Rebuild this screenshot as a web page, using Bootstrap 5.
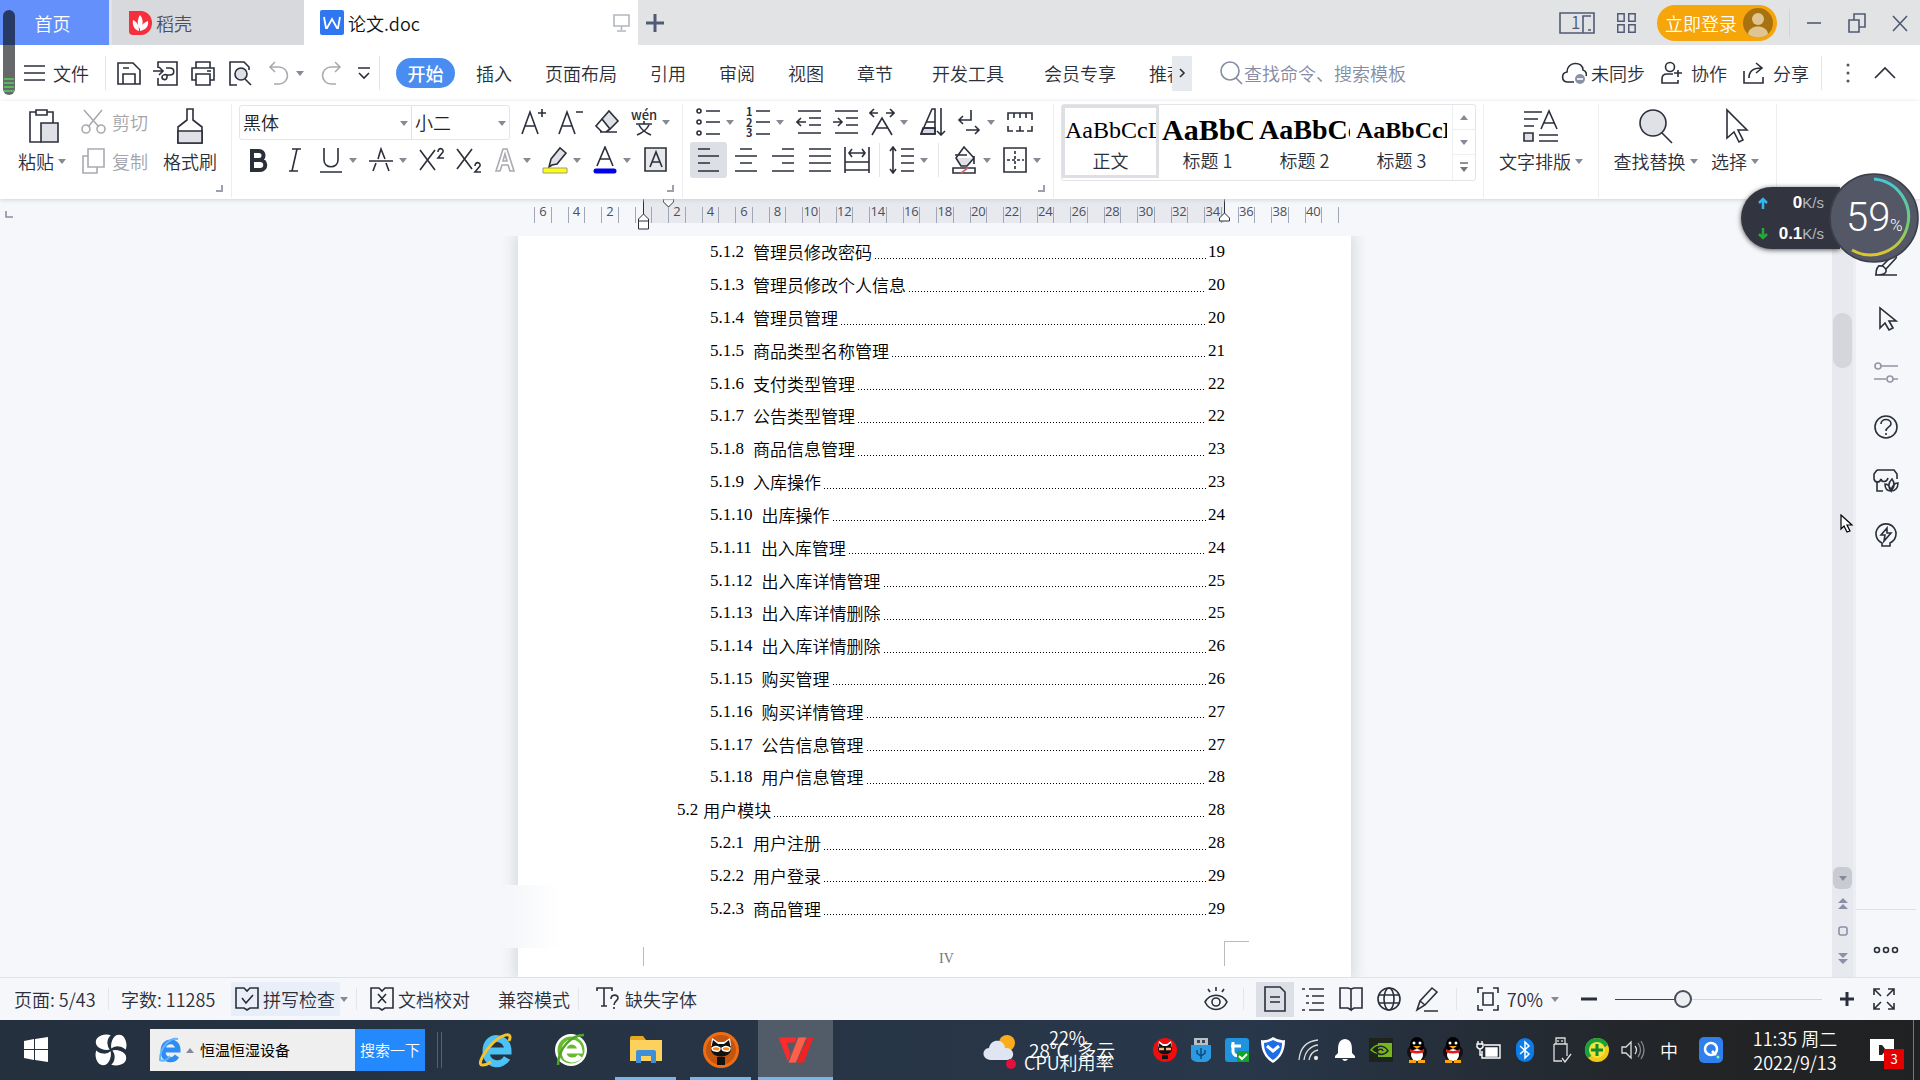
<!DOCTYPE html>
<html lang="zh-CN">
<head>
<meta charset="utf-8">
<meta name="viewport" content="width=device-width, initial-scale=1">
<title>论文.doc</title>
<link href="https://cdn.jsdelivr.net/npm/bootstrap@5.3.0/dist/css/bootstrap.min.css" rel="stylesheet">
<style>
:root{--ink:#2b2f3a;--line:#e3e5e9;--blue:#4a8df0}
body{font-family:"Noto Sans CJK SC",sans-serif;font-size:18px;font-weight:350;line-height:26px;color:var(--ink);background:#f5f7fa;overflow:hidden}
button{font:inherit;color:inherit;background:none;border:0;padding:0}
a{color:inherit;text-decoration:none;white-space:nowrap}
svg{fill:none;stroke:var(--ink);stroke-width:1.6;flex:none;display:block}
svg text{stroke:none;fill:var(--ink)}
.crt{width:0;height:0;border:4px solid transparent;border-top:5px solid #858a96;border-bottom:0;flex:none}
.vline{width:1px;background:var(--line);flex:none}
.dimmed{color:#a3a5ab}.dimmed svg{stroke:#a9abb1}
/* tabs */
.tabstrip{height:45px;background:#e1e3e5;flex:none}
.tab-home{width:109px;background:#6490fb;color:#fff}
.tab-shell{width:195px;background:#d8d9dd;color:#4b4f5a;border-left:3px solid #e1e3e5}
.tab-doc{width:334px;background:#fff;color:#111}
.login{width:120px;height:36px;border-radius:18px;background:#f6a50b;color:#fff}
.tabstrip svg{stroke:#515a75}
/* menu */
.menurow{height:56px;background:#fff;flex:none}
.menurow .m{padding:0 16px 0 17px}
.menurow .wide{padding:0 23px}
.pill{width:59px;height:30px;border-radius:15px;background:var(--blue);color:#fff;font-weight:500}
.finder{border:0;outline:0;width:190px;padding:0;color:#848ba3;font-weight:350}
.finder::placeholder{color:#848ba3;opacity:1}
.tabs-clip{overflow:hidden;width:776px}
.more{width:20px;height:35px;background:#e6e9ee}
/* ribbon */
.ribbon{height:98px;background:#fff;padding-top:3px;flex:none;box-shadow:0 1px 4px #cfd2d8;z-index:2;position:relative}
.grp{border-right:1px solid #eceef1;position:relative;height:94px}
.corner{position:absolute;right:8px;bottom:6px;width:7px;height:7px;border:solid #9aa0ae;border-width:0 2px 2px 0}
.tb{width:37px;height:36px;display:flex;align-items:center;justify-content:center;border-radius:3px}
.tb2{width:50px;height:36px;display:flex;align-items:center;padding-left:5px}
.tb2 .crt{margin-left:5px}
.on{background:#dcdfe5}
.rows{display:grid;row-gap:2px;align-content:start}
.big{height:74px;display:flex;flex-direction:column;align-items:center;white-space:nowrap}
.big .pic{height:44px;display:flex;align-items:center}
.big .cap{height:26px;display:flex;align-items:center;gap:4px}
.fontbox{width:271px;height:35px;border:1px solid var(--line);border-radius:3px}
.pick{position:relative}
.pick select{appearance:none;border:0;background:none;width:100%;height:33px;font:inherit;color:#222;padding:0 0 0 3px}
.pick .crt{position:absolute;right:3px;top:15px}
.gallery{width:415px;height:77px;border:1px solid var(--line);border-radius:3px}
.stl{width:97px;height:73px;overflow:hidden;border:3px solid transparent}
.stl.sel{border-color:#dedfe2}
.stl span{display:block;white-space:nowrap;overflow:hidden;line-height:40px;height:40px;color:#000;text-align:left;font-family:"Liberation Serif",serif;font-size:24px;font-weight:400}
.stl b{display:block;font-weight:350;line-height:20px;padding-bottom:3px}
.stl .h-a{font-size:30px;font-weight:700}.stl .h-b{font-size:28px;font-weight:700}.stl .h-c{font-weight:700}
.gscroll{width:23px;border-left:1px solid #eceef1}
.gscroll button{height:25px;display:flex;align-items:center;justify-content:center;border-bottom:1px solid #eceef1;width:100%}
.gscroll button:last-child{border:0}
.up{transform:rotate(180deg)}
/* document */
.stage{padding-left:37px;position:relative;min-width:0}
.sheetcol{width:833px;margin:0 auto}
.ruler{height:37px;margin:0 12px 0 16px;position:relative}
.ticks{height:24px;background:linear-gradient(90deg,transparent 109px,#e7e9ef 109px,#e7e9ef 690px,transparent 690px)}
.ticks i{flex:1 1 0;border-left:1px solid #a2a7b5;margin-top:8px;height:16px;font:13px/8px "Open Sans",sans-serif;color:#4b5060;display:flex;justify-content:center}
.ticks i:last-child{flex:none;width:1px}
.mk{position:absolute;top:0}
.sheet{background:#fff;box-shadow:0 0 14px 3px #d5d7dc;clip-path:inset(0 -16px 0 -16px)}
.toc{padding:0 126px 0 192px}
.toc a{flex:1 1 0;display:flex;align-items:center;font-family:"Liberation Serif","Noto Sans CJK SC",serif;font-size:17px;line-height:24px;color:#000;font-weight:400}
.toc a.l1{margin-left:-33px}
.toc .no{margin-right:9px}.toc .l1 .no{margin-right:5px}
.toc .ttl{font-family:"Noto Sans CJK SC",sans-serif;font-weight:350}
.toc .dots{flex:1;height:1px;margin:12px 2px 0 3px;background:repeating-linear-gradient(90deg,#000 0 1px,transparent 1px 3px)}
.foot{height:52px;position:relative;color:#777;font:14px/20px "Liberation Serif",serif}
.foot .a{position:absolute;left:125px;bottom:11px;height:19px;border-left:1px solid #bbb}
.foot .b{position:absolute;left:706px;bottom:11px;height:25px;width:25px;border:solid #bbb;border-width:1px 0 0 1px}
.ghost{position:absolute;left:480px;bottom:29px;width:80px;height:63px;background:linear-gradient(90deg,#f5f7fa 40%,#fff)}
.vscroll{width:24px;background:#e8e9ef;border-right:3px solid #eceef2;padding-top:114px;flex:none}
.thumb{width:19px;height:55px;border-radius:9px;background:#d4d6db}
.vdown{width:19px;height:22px;border-radius:6px;background:#c9cbd2}
.side{width:64px;padding:39px 0 0;flex:none}
.side .s{height:54px;display:flex;align-items:center;justify-content:center;width:60px}
.side .last{height:68px;border-top:1px solid #dde0e5;padding-top:13px}
/* status */
.status{height:43px;border-top:1px solid #dfe2e5;background:#f5f7fa;flex:none;white-space:nowrap}
.status .vline{height:22px}
.status .split{margin:0 13px 0 8px}
.spell{background:#e8eff9;width:109px;height:34px}
.view{width:38px;height:35px;display:flex;align-items:center;justify-content:center}
.zoomer{appearance:none;width:207px;height:20px;background:linear-gradient(90deg,#3a4254 33%,#d4d6da 33%) center/100% 1px no-repeat;margin:0 18px}
.zoomer::-webkit-slider-thumb{appearance:none;width:18px;height:18px;border-radius:9px;border:2px solid #4a4e58;background:#eceef0}
/* task bar */
.taskbar{height:60px;flex:none;color:#fff;background:linear-gradient(90deg,#24303e,#28374a 65%,#222426 88%,#202123)}
.taskbar svg{stroke:none}
.seek{width:205px;height:42px;background:#efefef;padding-left:8px}
.seek input{border:0;outline:0;background:none;font-size:15px;width:140px;color:#000;padding:0;margin-left:6px}
.go{width:70px;height:42px;background:#2389fd;font-size:15px}
.app{width:75px;height:60px;display:flex;align-items:center;justify-content:center;position:relative}
.app.run::after{content:"";position:absolute;left:7px;right:7px;bottom:0;height:3px;background:#79b5ea}
.app.cur{background:#525c69}.app.cur::after{left:0;right:0}
.t{width:36px;height:60px;display:flex;align-items:center;justify-content:center}
.weather{width:164px;height:60px;position:relative}
.weather span{position:absolute;white-space:nowrap}
.clock{width:124px;line-height:24px;font-size:18px}
.badge3{position:absolute;left:17px;top:29px;width:20px;height:20px;background:#e50000;font-size:13px;line-height:20px;text-align:center}
/* overlays */
.cap-l{position:absolute;left:3px;top:10px;width:12px;height:85px;border-radius:6px;z-index:5;background:linear-gradient(#273a66 35px,#66686a 35px);overflow:hidden}
.cap-l i{position:absolute;left:1px;right:1px;bottom:1px;height:16px;background:repeating-linear-gradient(#57b85f 0 2px,transparent 2px 4px)}
.net{position:absolute;right:80px;top:187px;width:99px;height:62px;border-radius:31px 0 0 31px;background:#323440;box-shadow:0 1px 5px #555;z-index:5;color:#fff;font:700 17px/20px "Liberation Sans",sans-serif;padding:0 16px 0 16px}
.net small{font-weight:400;color:#b4b7bf;font-size:15px}
.net div{height:31px}
.orb{position:absolute;right:1px;top:173px;z-index:6}
.mouse{position:absolute;right:66px;top:514px;z-index:6}
</style>
</head>
<body class="d-flex flex-column vh-100 position-relative">

<header class="tabstrip d-flex align-items-center">
  <button class="tab-home h-100"><span class="pe-1">首页</span></button>
  <button class="tab-shell h-100 d-flex align-items-center ps-3">
    <svg width="24" height="26" viewBox="0 0 24 26" style="stroke:none"><path fill="#f72e3c" d="M1 1h12a11 12 0 0 1 0 24H5a4 4 0 0 1-4-4z"/><path fill="#fff" d="M12 5c4 5 3 10 0 14-3-4-3-9 0-14zM5 10c4 2 6 5 6 11-4-1-7-5-6-11zM20 11c1 6-3 9-8 10 0-5 3-8 8-10z"/></svg><span class="ms-1">稻壳</span></button>
  <div class="tab-doc h-100 d-flex align-items-center ps-3">
    <svg width="24" height="26" viewBox="0 0 24 26"><rect width="24" height="25" rx="2" fill="#2f77f0" stroke="none"/><path stroke="#fff" stroke-width="1.8" d="M4 7l2 11h1l5-9 5 9h1l2-11"/></svg>
    <span class="ms-1">论文.doc</span>
    <svg class="ms-auto me-2" style="stroke:#b3b6bf" width="17" height="18" viewBox="0 0 17 18"><path d="M1 1h15v11H1zM8.500 12v4M4 17h9"/></svg>
  </div>
  <button class="ms-2" aria-label="新建"><svg width="18" height="18" viewBox="0 0 18 18"><path stroke-width="3" d="M9 0v18M0 9h18"/></svg></button>
  <div class="ms-auto d-flex align-items-center h-100">
    <svg width="36" height="22" viewBox="0 0 36 22"><path d="M24 21H1V1h34v20H24V4h8M29 18h3"/><text x="12" y="17" font-size="17" style="fill:#515a75">1</text></svg>
    <svg class="mx-3 ps-1" width="26" height="22" viewBox="-2 0 24 22"><path d="M1 1h7v8H1zM13 1h7v8h-7zM1 13h7v8H1zM13 13h7v8h-7z"/></svg>
    <button class="login ms-1 d-flex align-items-center justify-content-between ps-2 pe-1"><span class="text-nowrap">立即登录</span>
      <svg width="30" height="30" viewBox="0 0 30 30" style="stroke:none"><circle cx="15" cy="15" r="15" fill="#a8720f"/><circle cx="15" cy="11" r="6" fill="#e0c590"/><path fill="#e0c590" d="M5 26c1-10 19-10 20 0-6 5-14 5-20 0z"/></svg></button>
    <div class="vline" style="height:28px;background:#cfd2d6;margin:0 14px 0 12px"></div>
    <svg width="20" height="20" viewBox="0 0 20 20"><path d="M3 10h14"/></svg>
    <svg class="ms-4" width="18" height="20" viewBox="0 0 18 20"><path d="M1 7h10v12H1zM6 7V1h11v13h-6"/></svg>
    <svg class="ms-4" style="margin-right:10px" width="20" height="20" viewBox="0 0 20 20"><path d="M3 3l14 15M17 3L3 18"/></svg>
  </div>
</header>

<nav class="menurow d-flex align-items-center">
  <button class="d-flex align-items-center ms-4"><svg width="21" height="18" viewBox="0 0 21 18"><path d="M0 2h21M0 9h21M0 16h21"/></svg><span class="ms-2">文件</span></button>
  <div class="vline ms-3" style="height:34px"></div>
  <button class="tb ms-1"><svg width="26" height="26" viewBox="0 0 26 26"><path d="M2 3h15l7 7v14H2zM7 24V14h12v10M7 8h6"/></svg></button>
  <button class="tb"><svg width="26" height="26" viewBox="0 0 26 26"><path d="M5 8V2h19v23H5v-7M0 11h9M6 7l4 4-4 4M13 8h4c5 0 5 7 0 7h-3v2c0 4-5 3-5 0 0-2 3-3 5-2"/></svg></button>
  <button class="tb"><svg width="26" height="26" viewBox="0 0 26 26"><path d="M6 8V2h14v6M6 20H2V8h22v12h-4M6 14h14v11H6zM17 11h4"/></svg></button>
  <button class="tb"><svg width="26" height="26" viewBox="0 0 26 26"><path d="M10 25H3V2h14l5 5v3"/><circle cx="14" cy="14" r="6" fill="#dfe1e6"/><path d="M18 19l6 6"/></svg></button>
  <button class="tb2 dimmed ms-1"><svg width="24" height="26" viewBox="0 0 24 26"><path d="M8 2L3 7l5 5M3 7h9a8 8 0 1 1 0 17H7"/></svg><i class="crt"></i></button>
  <button class="tb dimmed me-2"><svg width="24" height="26" viewBox="0 0 24 26"><path d="M16 2l5 5-5 5M21 7h-9a8 8 0 1 0 0 17h5"/></svg></button>
  <svg width="14" height="14" viewBox="0 0 14 14"><path d="M1 2h12M2 7l5 5 5-5"/></svg>
  <div class="vline ms-2" style="height:34px"></div>
  <div class="tabs-clip d-flex align-items-center ms-3 flex-shrink-0">
    <a href="#" class="pill d-flex align-items-center justify-content-center me-1 flex-shrink-0">开始</a>
    <a href="#" class="m">插入</a><a href="#" class="m">页面布局</a><a href="#" class="m">引用</a><a href="#" class="m">审阅</a><a href="#" class="m">视图</a><a href="#" class="m">章节</a><a href="#" class="m wide">开发工具</a><a href="#" class="m">会员专享</a><a href="#" class="m">推荐</a>
  </div>
  <button class="more d-flex align-items-center justify-content-center"><svg width="8" height="12" viewBox="0 0 8 12"><path d="M2 2l4 4-4 4"/></svg></button>
  <label class="d-flex align-items-center ms-4"><svg class="ms-1" style="stroke:#848ba3" width="24" height="26" viewBox="0 0 24 26"><circle cx="10" cy="11" r="9"/><path d="M16 18l6 6"/></svg><input class="finder" placeholder="查找命令、搜索模板" aria-label="查找命令"></label>
  <div class="ms-auto d-flex align-items-center">
    <button class="d-flex align-items-center gap-1"><svg width="26" height="24" viewBox="0 0 26 24"><path d="M13 21H7C0 21 0 12 6 11 6 0 22 0 22 9c3 1 4 4 3 6"/><circle cx="19" cy="18" r="5" fill="#8a92a8" stroke="none"/><path stroke="#fff" d="M16 18h6"/></svg>未同步</button>
    <button class="d-flex align-items-center gap-2 ms-3"><svg width="22" height="24" viewBox="0 0 22 24"><circle cx="9" cy="6" r="4.500"/><path d="M13 22H1v-4c0-3 2-5 5-5h6M13 22h4v-3M17 9v7M13 12h8"/></svg>协作</button>
    <button class="d-flex align-items-center gap-2 ms-3"><svg width="22" height="24" viewBox="0 0 22 24"><path d="M1 10v12h19v-6M6 17c0-7 4-10 12-10M13 2l6 5-6 5"/></svg>分享</button>
    <div class="vline" style="height:34px;margin:0 24px 0 12px"></div>
    <svg width="4" height="20" viewBox="0 0 4 20" style="stroke:none;fill:#555"><circle cx="2" cy="2" r="1.500"/><circle cx="2" cy="10" r="1.500"/><circle cx="2" cy="18" r="1.500"/></svg>
    <svg class="mx-4" width="22" height="14" viewBox="0 0 22 14"><path d="M1 12L11 2l10 10"/></svg>
  </div>
</nav>

<section class="ribbon d-flex">
  <div class="grp d-flex" style="width:232px">
    <button class="big ps-2" style="width:76px"><span class="pic ps-1"><svg width="34" height="36" viewBox="0 0 34 36"><path d="M14 34H3V4h6M20 4h6v11"/><path d="M9 2h11v5H9z"/><path fill="#dfe1e6" d="M14 15h17v19H14z"/></svg></span><span class="cap">粘贴<i class="crt"></i></span></button>
    <div class="rows dimmed">
      <button class="d-flex align-items-center" style="height:36px"><svg class="mx-1" width="28" height="26" viewBox="0 0 28 26"><path d="M4 1l15 17M22 1L8 18"/><circle cx="6" cy="20" r="4"/><circle cx="21" cy="20" r="4"/></svg><span class="text-nowrap">剪切</span></button>
      <button class="d-flex align-items-center" style="height:38px"><svg class="mx-1" width="28" height="26" viewBox="0 0 28 26"><path d="M8 8H3v17h14v-6M8 1h16v18H8z"/></svg><span class="text-nowrap">复制</span></button>
    </div>
    <button class="big ms-2" style="width:68px"><span class="pic"><svg width="30" height="38" viewBox="0 0 30 38"><path d="M12 2h6v11l9 7v16H3V20l9-7z"/><path fill="#dfe1e6" d="M3 24h24v12H3z"/></svg></span><span class="cap">格式刷</span></button>
    <i class="corner"></i>
  </div>

  <div class="grp" style="width:451px;padding-left:7px"><div class="rows">
    <div class="d-flex align-items-center" style="height:36px">
      <div class="fontbox d-flex me-1"><div class="pick border-end" style="width:172px"><select aria-label="字体"><option>黑体</option></select><i class="crt"></i></div><div class="pick flex-fill"><select aria-label="字号"><option>小二</option></select><i class="crt"></i></div></div>
      <button class="tb" aria-label="增大字号"><svg width="26" height="28" viewBox="0 0 26 28"><path d="M2 26L10 4l8 22M5 18h10M22 1v8M18 5h8"/></svg></button>
      <button class="tb" aria-label="减小字号"><svg width="26" height="28" viewBox="0 0 26 28"><path d="M2 26L10 4l8 22M5 18h10M19 4h7"/></svg></button>
      <button class="tb" aria-label="清除格式"><svg width="26" height="26" viewBox="0 0 26 26"><path fill="#dfe1e6" d="M8 10l7-8 9 10-8 8z"/><path d="M8 10l-6 7 6 6h4l4-3M6 23h17"/></svg></button>
      <button class="tb2" aria-label="拼音"><svg width="28" height="28" viewBox="0 0 28 28"><text x="1" y="12" font-size="13" font-weight="500">wén</text><path d="M6 16h16M14 13v3M9 17c3 6 7 8 12 10M19 17c-3 6-7 8-12 10"/></svg><i class="crt ms-1"></i></button>
    </div>
    <div class="d-flex" style="height:36px">
      <button class="tb"><svg width="26" height="26" viewBox="0 0 26 26"><path stroke-width="4" d="M7 4h7c6 0 6 9 0 9H7zM7 13h8c7 0 7 10 0 10H7z"/></svg></button>
      <button class="tb"><svg width="26" height="26" viewBox="0 0 26 26"><path d="M10 2h9M7 24h9M15 2l-5 22"/></svg></button>
      <button class="tb2"><svg width="26" height="26" viewBox="0 0 26 26"><path d="M6 1v12c0 9 14 9 14 0V1M2 25h22"/></svg><i class="crt"></i></button>
      <button class="tb2"><svg width="26" height="26" viewBox="0 0 26 26"><path d="M5 24l3-8M10 12l3-10 4 10M18 16l3 8M1 14h24"/></svg><i class="crt"></i></button>
      <button class="tb"><svg width="26" height="26" viewBox="0 0 26 26"><path d="M1 3l15 20M16 3L1 23"/><path d="M19 5c0-5 6-4 5 0l-5 6h6"/></svg></button>
      <button class="tb"><svg width="26" height="26" viewBox="0 0 26 26"><path d="M1 2l15 20M16 2L1 22"/><path d="M19 19c0-5 6-4 5 0l-5 6h6"/></svg></button>
      <button class="tb2 dimmed"><svg width="26" height="26" viewBox="0 0 26 26"><path d="M4 24L11 2h4l7 22h-4l-2-6h-6l-2 6zM11 14l2-7 2 7z"/></svg><i class="crt"></i></button>
      <button class="tb2"><svg width="26" height="28" viewBox="0 0 26 28"><path fill="#dfe1e6" d="M9 13l9-11 6 5-9 11-5 1-3 2z"/><path fill="#ff0" stroke="#999" stroke-width="1" d="M1 22h24v5H1z"/></svg><i class="crt"></i></button>
      <button class="tb2"><svg width="26" height="28" viewBox="0 0 26 28"><path d="M5 20l8-19 8 19M8 13h10"/><path stroke="#0202e6" stroke-width="5" stroke-linecap="round" d="M4 25h18"/></svg><i class="crt"></i></button>
      <button class="tb"><svg width="24" height="26" viewBox="0 0 24 26"><path fill="#e6e8ec" d="M1 1h21v23H1z"/><path d="M6 20l6-15 6 15M8 15h8"/></svg></button>
    </div></div><i class="corner"></i>
  </div>

  <div class="grp" style="width:371px;padding-left:7px"><div class="rows">
    <div class="d-flex" style="height:36px">
      <button class="tb2"><svg width="26" height="28" viewBox="0 0 26 28"><path d="M11 3h14M11 14h14M11 26h14"/><circle cx="4" cy="3" r="2"/><circle cx="4" cy="14" r="2"/><circle cx="4" cy="25" r="2"/></svg><i class="crt"></i></button>
      <button class="tb2"><svg width="26" height="30" viewBox="0 0 26 30"><path d="M11 4h14M11 15h14M11 27h14"/><text x="1" y="9" font-size="11" font-weight="700">1</text><text x="1" y="20" font-size="11" font-weight="700">2</text><text x="1" y="30" font-size="11" font-weight="700">3</text></svg><i class="crt"></i></button>
      <button class="tb"><svg width="26" height="26" viewBox="0 0 26 26"><path d="M2 2h23M13 9h12M13 16h12M2 24h23M1 13h9M5 9l-4 4 4 4"/></svg></button>
      <button class="tb"><svg width="26" height="26" viewBox="0 0 26 26"><path d="M2 2h23M13 9h12M13 16h12M2 24h23M0 13h9M5 9l4 4-4 4"/></svg></button>
      <button class="tb2"><svg width="26" height="28" viewBox="0 0 26 28"><path d="M3 27l10-17 10 17M7 20h12M1 5h8M5 1L1 5l4 4M17 5h8M21 1l4 4-4 4"/></svg><i class="crt"></i></button>
      <button class="tb"><svg width="26" height="28" viewBox="0 0 26 28"><path fill="#dad6e8" d="M3 20h12v6H1z"/><path d="M1 26L12 1h3v25zM6 14h9M3 20h12M21 0v27M17 23l4 4 4-4"/></svg></button>
      <button class="tb2"><svg width="26" height="28" viewBox="0 0 26 28"><path d="M15 2v10H3M7 8l-4 4 4 4M10 22h13M19 18l4 4-4 4"/></svg><i class="crt"></i></button>
      <button class="tb"><svg width="26" height="22" viewBox="0 0 26 22"><path d="M1 9V2h24v7M7 2v5M13 2v5M19 2v5M1 15v5h5M25 15v5h-5M9 20h8M13 15v5"/></svg></button>
    </div>
    <div class="d-flex align-items-center" style="height:36px">
      <button class="tb on"><svg width="26" height="26" viewBox="0 0 26 26"><path d="M2 2h12M2 9h21M2 16h12M2 24h21"/></svg></button>
      <button class="tb"><svg width="26" height="26" viewBox="0 0 26 26"><path d="M7 2h12M2 9h22M7 16h12M2 24h22"/></svg></button>
      <button class="tb"><svg width="26" height="26" viewBox="0 0 26 26"><path d="M12 2h12M2 9h22M12 16h12M2 24h22"/></svg></button>
      <button class="tb"><svg width="26" height="26" viewBox="0 0 26 26"><path d="M2 2h22M2 9h22M2 16h22M2 24h22"/></svg></button>
      <button class="tb"><svg width="26" height="26" viewBox="0 0 26 26"><path d="M1 0v26M25 0v26M1 15h24M1 23h24M5 6h16M8 2L5 6l3 4M18 2l3 4-3 4"/></svg></button>
      <div class="vline mx-1" style="height:34px"></div>
      <button class="tb2"><svg width="26" height="28" viewBox="0 0 26 28"><path d="M4 1v26M1 5l3-4 3 4M1 23l3 4 3-4M12 3h13M12 10h13M12 17h13M12 25h13"/></svg><i class="crt"></i></button>
      <div class="vline mx-1" style="height:34px"></div>
      <button class="tb2 ms-1"><svg width="26" height="28" viewBox="0 0 26 28"><path fill="#dfe1e6" d="M5 12h17l-5 8H10z" stroke="none"/><path d="M12 1l10 11-7 8H9l-5-8zM3 9h12M22 10v8M1 22h22v5H1z"/><path stroke="#d66" d="M9 27l7-5"/></svg><i class="crt"></i></button>
      <button class="tb2"><svg width="26" height="28" viewBox="0 0 26 28"><path d="M2 2h22v24H2z"/><path stroke-dasharray="3 2" d="M13 5v18M5 14h17"/></svg><i class="crt"></i></button>
    </div></div><i class="corner"></i>
  </div>

  <div class="grp" style="width:430px;padding-left:7px">
    <div class="gallery d-flex">
      <button class="stl sel"><span>AaBbCcDd</span><b>正文</b></button>
      <button class="stl"><span class="h-a">AaBbCc</span><b>标题 1</b></button>
      <button class="stl"><span class="h-b">AaBbCc</span><b>标题 2</b></button>
      <button class="stl"><span class="h-c">AaBbCcDd</span><b>标题 3</b></button>
      <div class="gscroll ms-auto"><button><i class="crt up"></i></button><button><i class="crt"></i></button><button><svg width="10" height="12" viewBox="0 0 10 12" style="stroke:#777"><path d="M1 1h8"/><path fill="#777" stroke="none" d="M1 5h8l-4 5z"/></svg></button></div>
    </div>
  </div>

  <div class="grp" style="width:115px"><button class="big w-100"><span class="pic"><svg width="36" height="34" viewBox="0 0 36 34"><path d="M1 3h18M1 10h14M1 17h10M16 26h19M16 32h19M18 20l8-18 8 18M21 14h10"/><path fill="#dfe1e6" d="M1 24h9v8H1z"/></svg></span><span class="cap">文字排版<i class="crt"></i></span></button></div>
  <div class="grp d-flex" style="width:178px;padding-left:8px">
    <button class="big" style="width:97px"><span class="pic"><svg width="36" height="36" viewBox="0 0 36 36"><circle cx="15" cy="15" r="13" fill="#dfe1e6"/><path d="M24 25l10 10"/></svg></span><span class="cap">查找替换<i class="crt"></i></span></button>
    <button class="big" style="width:62px"><span class="pic ps-1"><svg width="26" height="36" viewBox="0 0 26 36"><path d="M3 2v28l7-6 5 10 4-2-5-10h9z"/></svg></span><span class="cap">选择<i class="crt"></i></span></button>
  </div>
</section>

<main class="d-flex flex-fill" style="min-height:0">
  <div class="stage flex-fill d-flex flex-column">
    <svg style="position:absolute;left:5px;top:12px;stroke:#8a90a0" width="8" height="8" viewBox="0 0 8 8"><path d="M1 0v6h7"/></svg>
    <div class="sheetcol"><div class="ruler"><div class="ticks d-flex" id="ticks"></div>
      <svg class="mk" style="left:103px" width="40" height="32" viewBox="0 0 40 32"><path stroke-width="1" fill="#fff" d="M6.500 0v15l5 5v10h-10V20l5-5M1.500 22h10M26.500 0h10v3l-5 5-5-5z"/></svg>
      <svg class="mk" style="left:684px" width="14" height="26" viewBox="0 0 14 26"><path stroke-width="1" fill="#fff" d="M6.500 0v14l5 5v3h-10v-3l5-5"/></svg>
    </div></div>
    <article class="sheet sheetcol flex-fill d-flex flex-column">
      <div class="toc flex-fill d-flex flex-column" id="toc"></div>
      <div class="foot text-center pt-4"><span class="ms-4">IV</span><i class="a"></i><i class="b"></i></div>
    </article>
    <div class="ghost"></div>
  </div>
  <div class="vscroll d-flex flex-column align-items-center">
    <div class="thumb"></div>
    <button class="vdown mt-auto d-flex align-items-center justify-content-center"><i class="crt"></i></button>
    <svg style="stroke:none;fill:#8a90a6;margin:9px 0 12px" width="10" height="12" viewBox="0 0 10 12"><path d="M5 0l5 5H0zM5 6l5 5H0z"/></svg>
    <svg style="stroke:#8a90a6;margin:4px 0 12px" width="10" height="10" viewBox="0 0 10 10"><rect x="1" y="1" width="8" height="8" rx="2"/></svg>
    <svg style="stroke:none;fill:#8a90a6;margin:5px 0 12px" width="10" height="12" viewBox="0 0 10 12"><path d="M5 5l5-5H0zM5 11l5-5H0z"/></svg>
  </div>
  <aside class="side d-flex flex-column">
    <button class="s"><svg width="24" height="24" viewBox="0 0 24 24"><path d="M1 22h22M8 13L19 2c2-1 4 1 3 3L12 16M8 13c-4-1-6 2-6 9 6 0 11-1 10-5-1-3-4-5-8-4z"/></svg></button>
    <button class="s"><svg width="24" height="26" viewBox="0 0 24 26"><path d="M6 2v20l5-5 4 7 4-2-4-7h7z"/></svg></button>
    <button class="s"><svg style="stroke:#9397a3" width="26" height="26" viewBox="0 0 26 26"><path d="M8 6h17M1 19h12M20 19h5"/><circle cx="5" cy="6" r="3"/><circle cx="17" cy="19" r="3"/></svg></button>
    <button class="s"><svg width="24" height="24" viewBox="0 0 24 24"><circle cx="12" cy="12" r="11"/><path d="M7 9c0-6 10-6 10 0 0 3-5 3-5 7M12 18v2"/></svg></button>
    <button class="s"><svg width="26" height="24" viewBox="0 0 26 24"><path d="M4 12v10h6M4 1h17l3 4v5M4 1L1 5v5c1 4 6 4 7 0 1 4 6 3 7-1M18 22c-3-4-3-8 1-12 3 4 3 8-1 12-4 0-6-3-6-7 3 0 5 2 6 7 4 0 7-3 7-8-4 0-6 3-7 8z"/></svg></button>
    <button class="s"><svg width="24" height="26" viewBox="0 0 24 26"><path d="M8 21a10 10 0 1 1 8 0v3H8zM13 6l-6 7h4l-1 6 7-8h-4z"/></svg></button>
    <button class="s last mt-auto"><svg width="26" height="8" viewBox="0 0 26 8"><circle cx="4" cy="4" r="2.500"/><circle cx="13" cy="4" r="2.500"/><circle cx="22" cy="4" r="2.500"/></svg></button>
  </aside>
</main>

<footer class="status d-flex align-items-center">
  <span style="width:108px;padding-left:14px">页面: 5/43</span><div class="vline"></div>
  <span style="width:118px" class="ps-2 ms-1">字数: 11285</span>
  <button class="spell d-flex align-items-center"><svg class="mx-1" width="24" height="24" viewBox="0 0 24 24"><path d="M1 1h8l3 3 3-3h8v20h-8l-3 2-3-2H1zM7 11l4 5 7-8"/></svg>拼写检查</button><i class="crt"></i>
  <div class="vline split"></div>
  <button class="d-flex align-items-center"><svg class="me-1" width="24" height="24" viewBox="0 0 24 24"><path d="M1 1h8l3 3 3-3h8v20h-8l-3 2-3-2H1zM8 7l8 9M16 7l-8 9"/></svg>文档校对</button>
  <button class="ms-4 ps-1">兼容模式</button><div class="vline ms-2 me-3"></div>
  <button class="d-flex align-items-center"><svg class="me-1" width="26" height="26" viewBox="0 0 26 26"><path d="M2 5V2h15v3M9 2v18M6 20h6M16 13c0-5 7-5 7-1 0 3-4 3-4 7M19 21v2"/></svg>缺失字体</button>
  <div class="ms-auto d-flex align-items-center">
    <button class="view"><svg width="24" height="26" viewBox="0 0 24 26"><path d="M1 16c5-9 17-9 22 0-5 10-17 10-22 0zM12 1v4M4 3l2 3M20 3l-2 3"/><circle cx="12" cy="16" r="4"/></svg></button>
    <div class="vline mx-2"></div>
    <button class="view on ms-1"><svg width="22" height="26" viewBox="0 0 22 26"><path d="M1 1h15l5 5v19H1zM6 11h10M6 16h10"/></svg></button>
    <button class="view"><svg width="24" height="26" viewBox="0 0 24 26"><path d="M1 3h3M8 3h15M5 10h3M11 10h12M5 17h3M11 17h12M1 24h3M8 24h15"/></svg></button>
    <button class="view"><svg width="24" height="26" viewBox="0 0 24 26"><path d="M12 3v21l-3-2H1V2h8zl3-1h8v20h-8l-3 2"/></svg></button>
    <button class="view"><svg width="24" height="26" viewBox="0 0 24 26"><circle cx="12" cy="13" r="11"/><ellipse cx="12" cy="13" rx="5" ry="11"/><path d="M2 9h20M2 17h20"/></svg></button>
    <button class="view"><svg width="24" height="26" viewBox="0 0 24 26"><path d="M9 25h14M2 24l3-9L17 2l5 4L10 19z M5 15l5 4"/></svg></button>
    <div class="vline" style="margin:0 12px 0 10px"></div>
    <button class="view"><svg width="22" height="26" viewBox="0 0 22 26"><path d="M1 7V2h5M16 2h5v5M21 19v5h-5M6 24H1v-5M6 7h10v12H6z"/></svg></button>
    <button class="d-flex align-items-center gap-2">70%<i class="crt"></i></button>
    <svg style="margin-left:22px" width="16" height="14" viewBox="0 0 16 14"><path stroke-width="3" d="M0 7h16"/></svg>
    <input type="range" class="zoomer" min="0" max="100" value="31" aria-label="显示比例">
    <svg width="14" height="14" viewBox="0 0 14 14"><path stroke-width="3" d="M0 7h14M7 0v14"/></svg>
    <svg class="ms-4" style="margin-right:24px;margin-left:18px!important" width="24" height="24" viewBox="0 0 24 24"><path d="M2 8V2h6M16 2h6v6M22 16v6h-6M8 22H2v-6M2 2l7 7M22 2l-7 7M22 22l-7-7M2 22l7-7"/></svg>
  </div>
</footer>

<footer class="taskbar d-flex align-items-center">
  <button class="t" style="width:72px"><svg width="24" height="26" viewBox="0 0 24 26" style="fill:#fff"><path d="M0 4l10-2v10H0zM11 2l13-2v12H11zM0 13h10v10L0 21zM11 13h13v12l-13-2z"/></svg></button>
  <button class="t" style="width:78px"><svg width="34" height="34" viewBox="0 0 34 34" style="stroke:#24303e;stroke-width:1.500;fill:#fff"><defs><path id="petal" d="M17 17C11 19 1 16 1 9 1 2 11-1 18 2 13 6 13 13 17 17z"/></defs><use href="#petal"/><use href="#petal" transform="rotate(90 17 17)"/><use href="#petal" transform="rotate(180 17 17)"/><use href="#petal" transform="rotate(270 17 17)"/></svg></button>
  <div class="seek d-flex align-items-center"><svg width="24" height="28" viewBox="0 0 24 28"><path stroke="#2e8df5" stroke-width="5" d="M6 14h14C20 3 5 3 5 15c0 10 10 11 14 5"/><path stroke="#63b4fb" stroke-width="2" d="M20 3c-8-2-18 8-18 21 4 2 8-1 10-4"/></svg><i class="crt up ms-1"></i><input value="恒温恒湿设备" aria-label="搜索"></div>
  <button class="go">搜索一下</button>
  <div class="vline" style="height:36px;margin:0 3px 0 12px;background:#566170"></div><div class="vline" style="height:36px;margin-right:16px;background:#566170"></div>
  <button class="app"><svg width="36" height="36" viewBox="0 0 36 36"><path stroke="#4cc3f4" stroke-width="7" d="M9 19h21C30 3 8 2 8 19c0 15 16 16 21 7"/><path stroke="#f3c22c" stroke-width="3" d="M31 9c5-11-9-6-18 4S-1 34 5 33c3 0 5-1 8-3"/></svg></button>
  <button class="app"><svg width="36" height="36" viewBox="0 0 36 36"><circle cx="18" cy="18" r="16" fill="#fff"/><circle cx="18" cy="18" r="13.500" fill="#66bb2e"/><path stroke="#fff" stroke-width="5" d="M10 19h17C26 7 11 7 11 19c0 11 12 11 16 5"/><path stroke="#4fa526" stroke-width="2.500" d="M31 3C18 3 5 17 5 33"/></svg></button>
  <button class="app run"><svg width="34" height="30" viewBox="0 0 34 30"><path fill="#e5a823" d="M1 3q0-2 2-2h11l3 4H1z"/><path fill="#fcd25d" d="M1 5h32v21H1z"/><path fill="#3f8fd6" d="M7 28V17q0-2 2-2h16q2 0 2 2v11h-5v-7H12v7z"/></svg></button>
  <button class="app run"><svg width="36" height="36" viewBox="0 0 36 36"><circle cx="18" cy="18" r="18" fill="#f06d14"/><circle cx="18" cy="18" r="15" fill="#c2560f"/><path fill="#fff" d="M8 14l1-8 6 4h6l6-4 1 8z"/><path fill="#111" d="M10 8l5 4h6l5-4 2 9c0 10-20 10-20 0zM14 25h8v8h-8z"/><path fill="#ff8a1c" stroke="#fff" stroke-width="1.500" d="M9 16q4-3 8 0 0 4-4 3-4 0-4-3zM19 16q4-3 8 0 0 4-4 3-4 0-4-3z"/></svg></button>
  <button class="app run cur"><svg width="38" height="30" viewBox="0 0 38 30" style="stroke:#525c69;stroke-width:.8"><path fill="#fd2a2a" d="M1 2h19l-2 6h-8l4 11-3 9z"/><path fill="#f02222" d="M20 28l-2-5L29 8l-1-6h9L27 28z"/><path fill="#ff5f48" d="M11 28L21 2h9L19 28z"/></svg></button>
  <div class="ms-auto d-flex align-items-center flex-shrink-0">
    <div class="weather"><svg width="36" height="40" viewBox="0 0 36 40" style="margin-top:10px"><circle cx="24" cy="13" r="8" fill="#fbab1c"/><path fill="#dfe6f2" d="M7 30C-3 28 0 18 6 18 8 8 21 9 22 18c10-1 11 12 2 12z"/><circle cx="28" cy="34" r="5" fill="#e5103c"/></svg>
      <span style="left:66px;top:4px">22%</span><span style="left:46px;top:17px;font-size:19px">28℃&nbsp; 多云</span><span style="left:41px;top:29px">CPU利用率</span></div>
    <span class="t"><svg width="26" height="26" viewBox="0 0 26 26"><circle cx="13" cy="13" r="12" fill="#f20d0d"/><path fill="#fff" d="M6 10l1-6 4 3h4l4-3 1 6z"/><path fill="#111" d="M7 6l4 3h4l4-3 1 6c0 7-14 7-14 0zM10 18h6v4h-6z"/><path stroke="#ffb37a" stroke-width="2.500" d="M7 12h5M14 12h5"/></svg></span>
    <span class="t"><svg width="22" height="26" viewBox="0 0 22 26"><path fill="#b8c0c8" d="M4 1h14v8H4z"/><path fill="#445" d="M7 3h3v3H7zM12 3h3v3h-3z"/><path fill="#2b9ae0" d="M1 8h20v13q-3 4-6 4H7q-5-1-6-4z"/><path stroke="#0d4d80" stroke-width="1.500" d="M11 11v11M7 13v3l4 3 4-3v-3"/></svg></span>
    <span class="t"><svg width="26" height="26" viewBox="0 0 26 26"><rect x="1" y="1" width="24" height="24" rx="3" fill="#1f93e0"/><path stroke="#fff" stroke-width="3" d="M9 5v10q2 6 8 2M7 9h10"/><path fill="#13a32a" d="M13 14h12v11H13z"/><path stroke="#fff" stroke-width="2" d="M15 19l3 3 5-5"/></svg></span>
    <span class="t"><svg width="24" height="26" viewBox="0 0 24 26"><path fill="#fff" d="M12 0q6 4 12 3c0 11-4 18-12 23C4 21 0 14 0 3q6 1 12-3z"/><path fill="#1d6ce8" d="M12 3q5 3 9 3c0 8-3 13-9 17C6 19 3 14 3 6q4 0 9-3z"/><path stroke="#fff" stroke-width="3" d="M6 9l6 5 6-5"/></svg></span>
    <span class="t"><svg width="22" height="24" viewBox="0 0 22 24" style="stroke:#ddd;stroke-width:1.300"><path d="M1 22C2 10 9 3 20 2M6 22c1-8 6-14 14-15M11 22c1-5 4-9 9-10"/><circle cx="18" cy="20" r="1.500" fill="#fff"/></svg></span>
    <span class="t"><svg width="22" height="24" viewBox="0 0 22 24" style="fill:#fff"><path d="M11 1c7 1 7 6 7 14l3 3v2H1v-2l3-3C4 7 4 2 11 1zM8 21h6q-3 4-6 0z"/></svg></span>
    <span class="t"><svg width="24" height="24" viewBox="0 0 24 24"><path fill="#1c241c" d="M0 0h24v24H0z"/><path fill="#76b51b" d="M9 5h14v14H9z"/><path stroke="#76b51b" stroke-width="1.500" d="M2 12q7-9 14-1-6 8-14 1z"/><path stroke="#223" stroke-width="1.500" d="M6 12c4-6 10-4 13 1-5 5-9 4-11 1 1-3 5-4 6-1"/></svg></span>
    <span class="t"><svg width="22" height="26" viewBox="0 0 22 26"><ellipse cx="11" cy="15" rx="10" ry="9" fill="#111"/><ellipse cx="11" cy="8" rx="7" ry="8" fill="#000"/><ellipse cx="11" cy="18" rx="6" ry="6" fill="#fff"/><path fill="#e21b1b" d="M4 12q7 4 14 0v3q-7 3-14 0z"/><circle cx="8" cy="6" r="1.500" fill="#fff"/><circle cx="14" cy="6" r="1.500" fill="#fff"/><path fill="#f8a414" d="M7 9h8l-4 3zM3 23h7v3H3zM12 23h7v3h-7z"/></svg></span>
    <span class="t"><svg width="22" height="26" viewBox="0 0 22 26"><ellipse cx="11" cy="15" rx="10" ry="9" fill="#111"/><ellipse cx="11" cy="8" rx="7" ry="8" fill="#000"/><ellipse cx="11" cy="18" rx="6" ry="6" fill="#fff"/><path fill="#e21b1b" d="M4 12q7 4 14 0v3q-7 3-14 0z"/><circle cx="8" cy="6" r="1.500" fill="#fff"/><circle cx="14" cy="6" r="1.500" fill="#fff"/><path fill="#f8a414" d="M7 9h8l-4 3zM3 23h7v3H3zM12 23h7v3h-7z"/></svg></span>
    <span class="t"><svg width="26" height="22" viewBox="0 0 26 22" style="stroke:#fff;stroke-width:1.400"><path d="M8 6h16v13H6v-7M2 2v3M6 2v3M1 5h6v3q-3 4-6 0zM4 10v6h2"/><path fill="#fff" d="M10 9h11v8H10z"/></svg></span>
    <span class="t"><svg width="20" height="26" viewBox="0 0 20 26"><rect x="1" y="1" width="18" height="24" rx="9" fill="#0b7ce8"/><path stroke="#fff" stroke-width="1.500" d="M5 9l9 8-4 4V5l4 4-9 8"/></svg></span>
    <span class="t"><svg width="22" height="26" viewBox="0 0 22 26" style="stroke:#ddd;stroke-width:1.300"><path d="M6 7V1h9v6M4 7h13v12M4 7v17h8M8 3v2M12 3v2M12 21l3 4 6-8"/></svg></span>
    <span class="t"><svg width="26" height="26" viewBox="0 0 26 26"><circle cx="13" cy="13" r="12" fill="#f4c817"/><path fill="#16a33a" d="M13 1a12 12 0 0 0-9 20L24 8A12 12 0 0 0 13 1z"/><circle cx="13" cy="13" r="8" fill="#f4e23c"/><path stroke="#118a2c" stroke-width="3" d="M13 7v12M7 13h12"/></svg></span>
    <span class="t"><svg width="24" height="22" viewBox="0 0 24 22" style="stroke:#ddd;stroke-width:1.300"><path d="M1 8h4l5-5v16l-5-5H1zM14 7q3 4 0 8"/><path stroke="#888" d="M17 4q5 7 0 14M20 2q6 9 0 18"/></svg></span>
    <span class="t">中</span>
    <span class="t" style="width:48px"><svg width="24" height="26" viewBox="0 0 24 26"><rect width="24" height="26" rx="5" fill="#2f80ed"/><circle cx="12" cy="12" r="6" stroke="#fff" stroke-width="2.500"/><path stroke="#fff" stroke-width="2.500" d="M13 14l4 4"/><circle cx="19" cy="20" r="1.500" fill="#7dff9a"/></svg></span>
    <div class="clock text-center pe-1">11:35 周二<br>2022/9/13</div>
    <span class="t position-relative" style="width:46px"><svg width="24" height="22" viewBox="0 0 24 22"><path fill="#fff" d="M0 0h24v22H0z"/><path fill="#222" d="M9 6h3l4 5-4 5H9z"/></svg><b class="badge3 ms-2 fw-normal">3</b></span>
    <div class="vline" style="height:60px;margin:0 6px 0 8px;background:#777"></div>
  </div>
</footer>

<div class="cap-l"><i></i></div>
<div class="net"><div class="d-flex align-items-center"><svg width="12" height="12" viewBox="0 0 12 12" style="stroke:#35b4ee;stroke-width:2.500"><path d="M6 12V2M2 6l4-4 4 4"/></svg><span class="ms-auto">0<small>K/s</small></span></div><div class="d-flex align-items-center"><svg width="12" height="12" viewBox="0 0 12 12" style="stroke:#24a83a;stroke-width:2.500"><path d="M6 0v10M2 6l4 4 4-4"/></svg><span class="ms-auto">0.1<small>K/s</small></span></div></div>
<svg class="orb" width="90" height="90" viewBox="0 0 90 90"><defs><linearGradient id="arc" x1="0" y1="0" x2="0" y2="1"><stop offset="0" stop-color="#45c8d8"/><stop offset=".6" stop-color="#6fce6f"/><stop offset="1" stop-color="#e0c52e"/></linearGradient></defs><circle cx="45" cy="45" r="44" fill="#535766" stroke="#3c3f4a"/><path stroke="url(#arc)" stroke-width="3" d="M45 6a38 38 0 1 1-22 71"/><text x="17" y="58" font-size="40" font-family="Roboto" font-weight="300" style="fill:#fff">59</text><text x="61" y="58" font-size="17" font-family="Roboto" style="fill:#fff">%</text></svg>
<svg class="mouse" width="14" height="20" viewBox="0 0 14 20" style="stroke:#000;stroke-width:1.200;fill:#fff"><path d="M1 1v14l3-3 3 6 3-1-3-6h5z"/></svg>

<script src="https://cdn.jsdelivr.net/npm/bootstrap@5.3.0/dist/js/bootstrap.bundle.min.js"></script>
<script>
// Ruler: every second cell carries a number, counted outwards from the left margin.
const labels = [6, 4, 2, ''];
for (let n = 2; n <= 40; n += 2) labels.push(n);
document.getElementById('ticks').innerHTML = labels.map(n => `<i>${n}</i><i></i>`).join('') + '<i></i>';

// Table of contents: number, title, page.
const entries = [
  ['5.1.2','管理员修改密码',19],['5.1.3','管理员修改个人信息',20],['5.1.4','管理员管理',20],
  ['5.1.5','商品类型名称管理',21],['5.1.6','支付类型管理',22],['5.1.7','公告类型管理',22],
  ['5.1.8','商品信息管理',23],['5.1.9','入库操作',23],['5.1.10','出库操作',24],
  ['5.1.11','出入库管理',24],['5.1.12','出入库详情管理',25],['5.1.13','出入库详情删除',25],
  ['5.1.14','出入库详情删除',26],['5.1.15','购买管理',26],['5.1.16','购买详情管理',27],
  ['5.1.17','公告信息管理',27],['5.1.18','用户信息管理',28],['5.2','用户模块',28],
  ['5.2.1','用户注册',28],['5.2.2','用户登录',29],['5.2.3','商品管理',29]];
document.getElementById('toc').innerHTML = entries.map(([no, title, page]) =>
  `<a href="#" class="${no.split('.').length === 2 ? 'l1' : ''}"><span class="no">${no}</span><span class="ttl">${title}</span><span class="dots"></span><span>${page}</span></a>`).join('');
</script>
</body>
</html>
